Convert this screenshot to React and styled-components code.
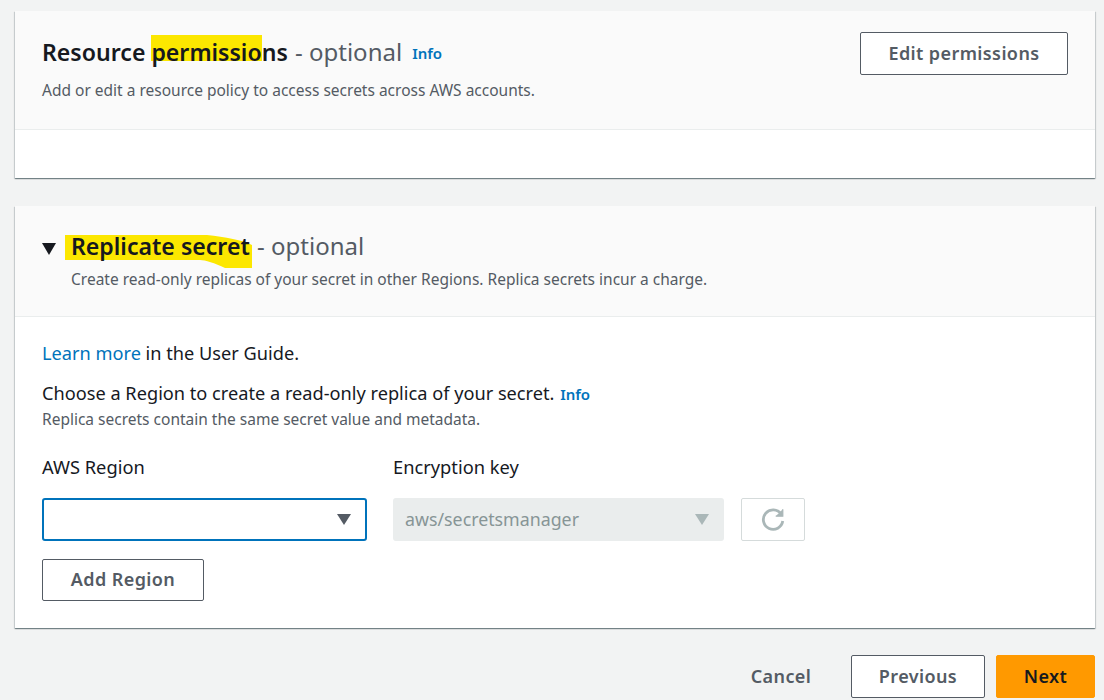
import React from "react";
import styled, { createGlobalStyle, css } from "styled-components";

const GlobalStyle = createGlobalStyle`
  html, body { margin: 0; padding: 0; background: #f2f3f3; }
  body { font-family: "Noto Sans", "Open Sans", sans-serif; color: #16191f; }
`;

const Page = styled.div`
  width: 1104px;
  height: 700px;
  overflow: hidden;
  box-sizing: border-box;
  padding: 11px 9px 0 15px;
  display: flex;
  flex-direction: column;
`;

const Card = styled.section`
  background: #fff;
  height: ${(p) => p.$height}px;
  margin-bottom: ${(p) => p.$gap}px;
  box-sizing: border-box;
  box-shadow: 0 1px 1px 0 rgba(0, 28, 36, 0.38), 1px 1px 1px 0 rgba(0, 28, 36, 0.12), -1px 1px 1px 0 rgba(0, 28, 36, 0.12);
`;

const CardHeader = styled.header`
  background: #fafafa;
  border-bottom: 1px solid #eaeded;
  box-sizing: border-box;
  height: ${(p) => p.$height}px;
  padding: ${(p) => p.$pad};
  display: flex;
  justify-content: space-between;
  align-items: flex-start;
`;

const TitleBlock = styled.div`
  flex: 1;
`;

const TitleRow = styled.div`
  display: flex;
  align-items: baseline;
  font-size: 24px;
  line-height: 30px;
`;

const Title = styled.h2`
  position: relative;
  z-index: 0;
  margin: 0;
  font-size: 23.1px;
  font-weight: 600;
  color: #16191f;
  white-space: pre;
`;

const Optional = styled.span`
  color: #545b64;
  font-weight: 400;
  white-space: pre;
  padding-left: 1px;
`;

const Marker = styled.svg`
  position: absolute;
  z-index: -1;
  left: ${(p) => p.$left}px;
  top: ${(p) => p.$top}px;
`;

const InfoLink = styled.a`
  color: #0073bb;
  font-size: 15px;
  font-weight: 600;
  margin-left: ${(p) => p.$gap}px;
  transform: translateY(-2px);
`;

const Description = styled.p`
  margin: ${(p) => p.$top || 0}px 0 0;
  font-size: 15.5px;
  line-height: 20px;
  color: #545b64;
`;

const Button = styled.button`
  font-family: inherit;
  font-size: 18px;
  font-weight: 600;
  letter-spacing: 0.4px;
  box-sizing: border-box;
  height: ${(p) => p.$height || 43}px;
  width: ${(p) => p.$width}px;
  padding: 0 0 2px;
  border-radius: 2px;
  cursor: pointer;
  ${(p) =>
    p.$variant === "primary"
      ? css`
          background: #ff9900;
          border: 1px solid #ff9900;
          color: #16191f;
        `
      : p.$variant === "link"
      ? css`
          background: transparent;
          border: 1px solid transparent;
          color: #545b64;
          margin-right: 9px;
        `
      : css`
          background: #fff;
          border: 1px solid #545b64;
          color: #545b64;
        `}
`;

const HeaderAction = styled(Button)`
  margin-top: -5px;
`;

const Toggle = styled.svg`
  flex: none;
  margin: 12px 15px 0 0;
`;

const Body = styled.div`
  padding: 26px 27px 0;
`;

const Paragraph = styled.p`
  margin: ${(p) => p.$top || 0}px 0 0;
  font-size: 18.2px;
  line-height: 20px;
  color: #16191f;
`;

const TextLink = styled.a`
  color: #0073bb;
`;

const InlineInfo = styled.a`
  color: #0073bb;
  font-size: 15px;
  font-weight: 600;
  margin-left: 1px;
`;

const FieldRow = styled.div`
  display: flex;
  align-items: flex-end;
  margin-top: 27px;
`;

const Field = styled.div`
  width: ${(p) => p.$width}px;
  margin-right: ${(p) => p.$gap}px;
`;

const FieldLabel = styled.label`
  display: block;
  font-size: 18.3px;
  line-height: 22px;
  margin-bottom: 20px;
  color: #16191f;
`;

const Select = styled.div`
  box-sizing: border-box;
  height: 43px;
  display: flex;
  align-items: center;
  justify-content: space-between;
  border-radius: 3px;
  padding: 0 14px 2px 12px;
  font-size: 17.8px;
  ${(p) =>
    p.$disabled
      ? css`
          background: #eaeded;
          color: #879596;
          padding-right: 15px;
        `
      : css`
          background: #fff;
          border: 2px solid #0073bb;
          color: #16191f;
        `}
`;

const Caret = styled.svg`
  flex: none;
  fill: ${(p) => p.$color};
  margin-top: 2px;
`;

const RefreshButton = styled.div`
  box-sizing: border-box;
  width: 64px;
  height: 43px;
  background: #fff;
  border: 1px solid #d5dbdb;
  border-radius: 2px;
  display: flex;
  align-items: center;
  justify-content: center;
`;

const AddRow = styled.div`
  margin-top: 18px;
`;

const Footer = styled.footer`
  display: flex;
  align-items: center;
  justify-content: flex-end;
  gap: 11px;
`;

const caret = "M0 0h14l-7 11z";

export default function App() {
  return (
    <>
      <GlobalStyle />
      <Page>
        <Card $height={167} $gap={28}>
          <CardHeader $height={119} $pad="26px 27px 0 27px">
            <div>
              <TitleRow>
                <Title>
                  <Marker $left={109} $top={-2} width="111" height="26">
                    <rect width="111" height="26" fill="#fce700" />
                  </Marker>
                  Resource permissions
                </Title>
                <Optional> - optional</Optional>
                <InfoLink $gap={10}>Info</InfoLink>
              </TitleRow>
              <Description $top={10}>Add or edit a resource policy to access secrets across AWS accounts.</Description>
            </div>
            <HeaderAction $width={208}>Edit permissions</HeaderAction>
          </CardHeader>
        </Card>

        <Card $height={422} $gap={27}>
          <CardHeader $height={111} $pad="25px 27px 0">
            <Toggle width="14" height="12" viewBox="0 0 14 12">
              <path d="M0 0h14l-7 12z" fill="#16191f" />
            </Toggle>
            <TitleBlock>
              <TitleRow>
                <Title>
                  <Marker $left={-6} $top={4} width="188" height="33" viewBox="0 0 188 33">
                    <path d="M0 0H142C160 2 178 5 187 10V33H160C150 28 140 25 135 25H0Z" fill="#fce700" />
                  </Marker>
                  Replicate secret
                </Title>
                <Optional> - optional</Optional>
              </TitleRow>
              <Description $top={8}>Create read-only replicas of your secret in other Regions. Replica secrets incur a charge.</Description>
            </TitleBlock>
          </CardHeader>
          <Body>
            <Paragraph>
              <TextLink>Learn more</TextLink> in the User Guide.
            </Paragraph>
            <Paragraph $top={20}>
              Choose a Region to create a read-only replica of your secret. <InlineInfo>Info</InlineInfo>
            </Paragraph>
            <Description $top={5}>Replica secrets contain the same secret value and metadata.</Description>
            <FieldRow>
              <Field $width={325} $gap={26}>
                <FieldLabel>AWS Region</FieldLabel>
                <Select>
                  <span />
                  <Caret $color="#545b64" width="14" height="11" viewBox="0 0 14 11">
                    <path d={caret} />
                  </Caret>
                </Select>
              </Field>
              <Field $width={331} $gap={17}>
                <FieldLabel>Encryption key</FieldLabel>
                <Select $disabled>
                  <span>aws/secretsmanager</span>
                  <Caret $color="#aab7b8" width="14" height="11" viewBox="0 0 14 11">
                    <path d={caret} />
                  </Caret>
                </Select>
              </Field>
              <RefreshButton>
                <svg width="26" height="26" viewBox="0 0 24 24" fill="none" stroke="#aab7b8" strokeWidth="2.6">
                  <path d="M19.5 6.5A9 9 0 1 0 21 13" />
                  <path d="M21 2v6.5h-6.5" fill="#aab7b8" strokeWidth="1.2" />
                </svg>
              </RefreshButton>
            </FieldRow>
            <AddRow>
              <Button $width={162} $height={42}>Add Region</Button>
            </AddRow>
          </Body>
        </Card>

        <Footer>
          <Button $variant="link" $width={100}>Cancel</Button>
          <Button $width={134}>Previous</Button>
          <Button $variant="primary" $width={99}>Next</Button>
        </Footer>
      </Page>
    </>
  );
}
